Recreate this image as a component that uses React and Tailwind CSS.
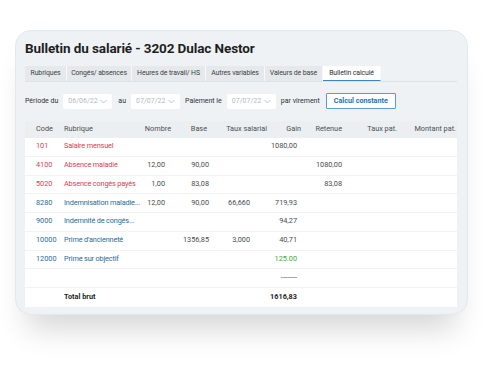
import React from "react";

const tabs = [
  { label: "Rubriques", w: "w-[42px]" },
  { label: "Congés/ absences", w: "w-[65px]" },
  { label: "Heures de travail/ HS", w: "w-[74px]" },
  { label: "Autres variables", w: "w-[59px]" },
  { label: "Valeurs de base", w: "w-[58px]" },
  { label: "Bulletin calculé", w: "w-[58px]", active: true },
];

const rows = [
  { code: "101", name: "Salaire mensuel", tone: "red", gain: "1080,00" },
  { code: "4100", name: "Absence maladie", tone: "red", nombre: "12,00", base: "90,00", retenue: "1080,00" },
  { code: "5020", name: "Absence congés payés", tone: "red", nombre: "1,00", base: "83,08", retenue: "83,08" },
  { code: "8280", name: "Indemnisation maladie...", tone: "blue", nombre: "12,00", base: "90,00", taux: "66,660", gain: "719,93" },
  { code: "9000", name: "Indemnité de congés...", tone: "blue", gain: "94,27" },
  { code: "10000", name: "Prime d'ancienneté", tone: "blue", base: "1356,85", taux: "3,000", gain: "40,71" },
  { code: "12000", name: "Prime sur objectif", tone: "blue", gain: "125.00", green: true },
  { code: "", name: "", gain: "--------" },
];

const cols = "grid grid-cols-[35px_80px_35px_40px_55px_35px_45px_55px_52px]";

function Chevron() {
  return (
    <svg width="7" height="5" viewBox="0 0 7 5" className="ml-auto mr-[5px]">
      <path d="M0.5 1l3 3 3-3" fill="none" stroke="#b7bdc2" strokeWidth="0.9" />
    </svg>
  );
}

function DateInput({ value }) {
  return (
    <div className="flex items-center w-[49px] h-[15px] bg-white rounded-[2px] pl-[5px] text-[#b3b9be]">
      <span>{value}</span>
      <Chevron />
    </div>
  );
}

export default function App() {
  return (
    <div className="w-[500px] h-[373px] bg-white overflow-hidden pt-[30px] font-['Roboto',sans-serif]">
      <div className="ml-[15px] w-[453px] h-[285px] rounded-[16px] bg-[#eff2f4] border border-[#e4e8eb] shadow-[0_26px_30px_-12px_rgba(0,0,0,0.16)] pl-[9px] pr-[10px] pt-[7px]">
        <h1 className="h-[20px] flex items-center text-[13.5px] font-bold text-[#1d1f22] tracking-[-0.1px]">
          Bulletin du salarié - 3202 Dulac Nestor
        </h1>

        <div className="mt-[8px] flex border-b border-[#dde2e5] text-[6.9px] tracking-[-0.1px] text-[#3b3f44]">
          {tabs.map((t) => (
            <div
              key={t.label}
              className={`${t.w} h-[15px] flex items-center justify-center whitespace-nowrap border-r border-[#f7f8f9] ${
                t.active ? "bg-white border-b border-b-[#3b84c6] text-[#2c3035]" : "bg-[#e6e9eb]"
              }`}
            >
              {t.label}
            </div>
          ))}
        </div>

        <div className="mt-[11px] flex items-center gap-[5px] text-[7px] text-[#2d3136]">
          <span>Période du</span>
          <DateInput value="06/06/22" />
          <span className="ml-[1px]">au</span>
          <DateInput value="07/07/22" />
          <span>Paiement le</span>
          <DateInput value="07/07/22" />
          <span>par virement</span>
          <button className="ml-[1px] w-[70px] h-[16px] bg-white border border-[#5b9ad6] rounded-[1px] text-[#2471b8] font-bold text-[7.2px]">
            Calcul constante
          </button>
        </div>

        <div className="mt-[12px] bg-white text-[7.3px]">
          <div className={`${cols} h-[17px] items-center bg-[#eceff1] text-[#4a4f55]`}>
            <span className="pl-[11px]">Code</span>
            <span className="pl-[4px]">Rubrique</span>
            <span className="text-right pr-[4px]">Nombre</span>
            <span className="text-right pr-[8px]">Base</span>
            <span className="text-right pr-[3px] whitespace-nowrap">Taux salarial</span>
            <span className="text-right pr-[4px]">Gain</span>
            <span className="text-right pr-[8px]">Retenue</span>
            <span className="text-right pr-[8px]">Taux pat.</span>
            <span className="text-right pr-[1px] whitespace-nowrap">Montant pat.</span>
          </div>

          {rows.map((r, i) => {
            const tone = r.tone === "red" ? "text-[#d9414f]" : "text-[#2a6b99]";
            return (
              <div key={i} className={`${cols} h-[18.75px] items-center border-b border-[#f1f3f4] text-[#474b50]`}>
                <span className={`pl-[11px] ${tone}`}>{r.code}</span>
                <span className={`pl-[4px] whitespace-nowrap tracking-[-0.15px] ${tone}`}>{r.name}</span>
                <span className="text-right pr-[10px]">{r.nombre}</span>
                <span className="text-right pr-[6px]">{r.base}</span>
                <span className="text-right pr-[20px]">{r.taux}</span>
                <span className={`text-right pr-[8px] ${r.green ? "text-[#3aa845]" : ""}`}>{r.gain}</span>
                <span className="text-right pr-[8px]">{r.retenue}</span>
                <span />
                <span />
              </div>
            );
          })}

          <div className={`${cols} h-[18.75px] items-center font-bold text-[#1d1f22]`}>
            <span />
            <span className="pl-[4px]">Total brut</span>
            <span />
            <span />
            <span />
            <span className="text-right pr-[8px]">1616,83</span>
            <span />
            <span />
            <span />
          </div>
        </div>
      </div>
    </div>
  );
}
